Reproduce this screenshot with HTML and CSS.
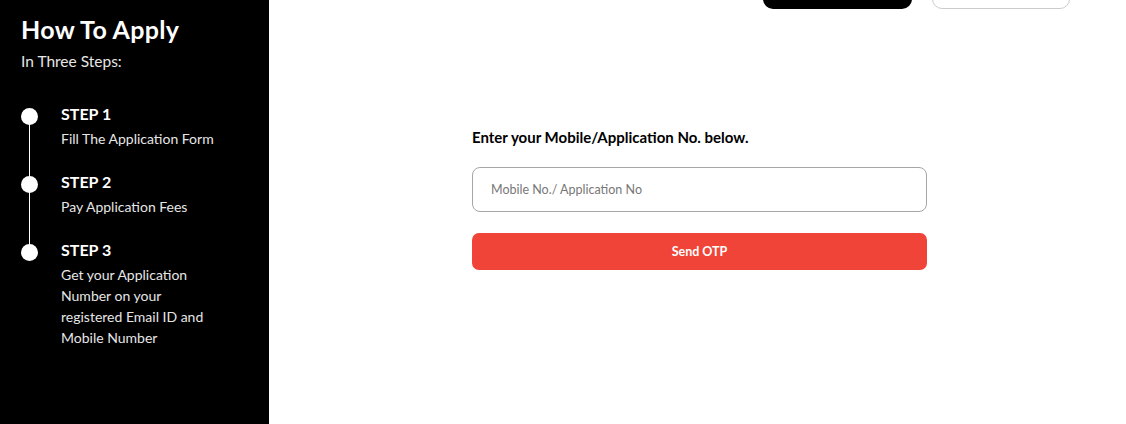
FILE: index.html
```html
<!DOCTYPE html>
<html lang="en">
<head>
    <meta charset="UTF-8">
    <meta name="viewport" content="width=device-width, initial-scale=1.0">
    <title>How To Apply</title>
    <link rel="stylesheet" href="styles.css">
</head>
<body>
    <div class="page">
        <aside class="sidebar">
            <h1>How To Apply</h1>
            <p class="subtitle">In Three Steps:</p>
            <ol class="steps">
                <li class="step">
                    <span class="dot"></span>
                    <div class="step-body">
                        <h3>STEP 1</h3>
                        <p>Fill The Application Form</p>
                    </div>
                </li>
                <li class="step">
                    <span class="dot"></span>
                    <div class="step-body">
                        <h3>STEP 2</h3>
                        <p>Pay Application Fees</p>
                    </div>
                </li>
                <li class="step">
                    <span class="dot"></span>
                    <div class="step-body">
                        <h3>STEP 3</h3>
                        <p>Get your Application Number on your registered Email ID and Mobile Number</p>
                    </div>
                </li>
            </ol>
        </aside>

        <main class="main">
            <div class="top-actions">
                <button class="btn-dark"></button>
                <button class="btn-outline"></button>
            </div>

            <form class="otp-form" onsubmit="return false;">
                <label for="mobile">Enter your Mobile/Application No. below.</label>
                <input id="mobile" type="text" placeholder="Mobile No./ Application No">
                <button type="submit" class="btn-send">Send OTP</button>
            </form>
        </main>
    </div>
</body>
</html>
```

FILE: styles.css
```css
body {
    margin: 0;
    font-family: Lato, "Noto Sans", sans-serif;
    background: #fff;
    color: #000;
}
.page {
    display: flex;
    min-height: 424px;
    height: 100vh;
    overflow: hidden;
}
.sidebar {
    width: 269px;
    flex-shrink: 0;
    background: #000;
    color: #fff;
    padding: 14px 21px 0;
    box-sizing: border-box;
}
.sidebar h1 {
    margin: 0;
    font-size: 25px;
    font-weight: 700;
    line-height: 30px;
    letter-spacing: 0.3px;
}
.subtitle {
    margin: 7px 0 0;
    font-size: 15.5px;
    line-height: 20px;
    color: #e6e6e6;
}
.steps {
    list-style: none;
    margin: 34px 0 0;
    padding: 0;
}
.step {
    position: relative;
    display: flex;
    gap: 23px;
    padding-bottom: 24px;
}
.step:not(:last-child)::before {
    content: "";
    position: absolute;
    left: 8px;
    top: 12px;
    bottom: -12px;
    width: 1px;
    background: #fff;
}
.dot {
    width: 17px;
    height: 17px;
    border-radius: 50%;
    background: #fff;
    flex-shrink: 0;
    margin-top: 3px;
    position: relative;
}
.step-body h3 {
    margin: 0;
    font-size: 16px;
    font-weight: 700;
    line-height: 18px;
}
.step-body p {
    margin: 5px 0 0;
    font-size: 14px;
    line-height: 21px;
    color: #e6e6e6;
    max-width: 160px;
}
.main {
    flex: 1;
}
.top-actions {
    display: flex;
    justify-content: flex-end;
    gap: 20px;
    padding-right: 56px;
    margin-top: -31px;
}
.top-actions button {
    height: 40px;
    border-radius: 10px;
}
.btn-dark {
    width: 149px;
    background: #000;
    border: none;
}
.btn-outline {
    width: 138px;
    background: #fff;
    border: 1px solid #ccc;
}
.otp-form {
    width: 455px;
    margin: 119px 0 0 203px;
    display: flex;
    flex-direction: column;
}
.otp-form label {
    font-size: 15px;
    font-weight: 700;
    line-height: 18px;
}
.otp-form input {
    margin-top: 21px;
    height: 45px;
    box-sizing: border-box;
    border: 1px solid #a6a6a6;
    border-radius: 8px;
    padding: 0 18px;
    font-family: inherit;
    font-size: 12.5px;
}
.otp-form input::placeholder {
    color: #777;
}
.btn-send {
    margin-top: 21px;
    height: 37px;
    border: none;
    border-radius: 7px;
    background: #ef4437;
    color: #fff;
    font-family: inherit;
    font-size: 12.5px;
    font-weight: 700;
    cursor: pointer;
}
```
